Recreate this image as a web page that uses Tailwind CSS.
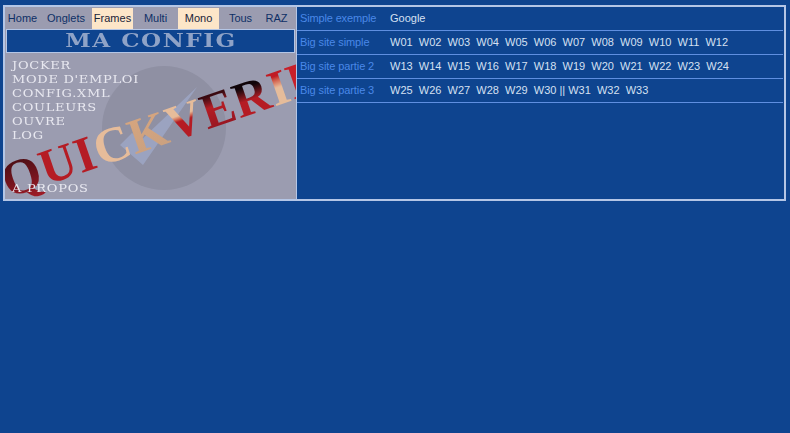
<!DOCTYPE html>
<html><head><meta charset="utf-8">
<script src="https://cdn.jsdelivr.net/npm/@tailwindcss/browser@4"></script>
</head>
<body class="m-0 w-[790px] h-[433px] overflow-hidden bg-[#0e448f] font-['Liberation_Sans',sans-serif] text-[11px] leading-none">
<div class="ml-[3px] mt-[5px] w-[783px] h-[196px] flex border-2 border-[#b4c6e6]">
  <div class="relative w-[292px] h-full shrink-0 bg-[#9b9cb0] overflow-hidden border-r border-[#b4c6e6]">
    <div class="flex h-[22px] pt-[1px] text-[#0e2f66] text-center items-stretch">
      <a class="w-[35px] leading-[20px]">Home</a>
      <a class="w-[46px] ml-[3px] leading-[20px]">Onglets</a>
      <a class="w-[41px] ml-[3px] leading-[20px] bg-[#fde6c8] text-[#1a2438]">Frames</a>
      <a class="w-[45px] leading-[20px]">Multi</a>
      <a class="w-[41px] leading-[20px] bg-[#fde6c8] text-[#1a2438]">Mono</a>
      <a class="w-[43px] leading-[20px]">Tous</a>
      <a class="w-[29px] leading-[20px]">RAZ</a>
    </div>
    <div class="mx-[1px] h-[24px] bg-[#0e448f] border border-[#b4c6e6] flex items-center justify-center relative z-10">
      <span class="font-['DejaVu_Serif',serif] font-bold text-[#8fa3c7] text-[18px] tracking-[1.2px] scale-x-[1.28]">MA CONFIG</span>
    </div>
    <div class="absolute left-[97px] top-[59px] w-[124px] h-[124px] rounded-full bg-[#8f90a3]"></div>
    <svg class="absolute left-0 top-0" width="292" height="192" viewBox="0 0 292 192"><polygon points="115,138 127,126 136,133 192,80 138,158" fill="#9ba3c0"/></svg>
    <div class="absolute left-[-2px] top-[150px] origin-left rotate-[-19deg] font-['Liberation_Serif',serif] font-bold text-[50px] leading-[50px] tracking-[0.8px] whitespace-nowrap">
      <span class="bg-linear-to-b from-[#3a0a10] to-[#a51c28] bg-clip-text text-transparent">Q</span><span class="text-[#b51c24]">UI</span><span class="text-[#e6bc9a]">C</span><span class="bg-linear-to-b from-[#d9a67e] to-[#c8a080] bg-clip-text text-transparent">K</span><span class="bg-linear-to-b from-[#e6bc9a] from-40% to-[#b51c24] to-50% bg-clip-text text-transparent">V</span><span class="bg-linear-to-b from-[#3a0a10] from-25% via-[#b51c24] via-45% to-[#8a1420] bg-clip-text text-transparent">E</span><span class="bg-linear-to-b from-[#100408] from-30% to-[#b51c24] to-55% bg-clip-text text-transparent">R</span><span class="bg-linear-to-b from-[#c01c24] from-30% to-[#e6bc9a] to-50% bg-clip-text text-transparent">I</span><span class="text-[#c8202a]">F</span>
    </div>
    <div class="absolute left-[7px] top-[52px] origin-left scale-x-[1.18] font-['DejaVu_Serif',serif] text-[#e8e8f0] text-[11px] leading-[14px] tracking-[0.6px] whitespace-nowrap">
      <div>JOCKER</div><div>MODE D'EMPLOI</div><div>CONFIG.XML</div><div>COULEURS</div><div>OUVRE</div><div>LOG</div>
      <div class="mt-[39px]">A PROPOS</div>
    </div>
  </div>
  <div class="flex-1 flex flex-col text-[#d5e0f2] pr-[1px]">
    <div class="h-[24px] flex items-center border-b border-[#5f8fe0] pl-[3px]"><span class="w-[90px] text-[#4a88e8] tracking-[-0.15px]">Simple exemple</span><span>Google</span></div>
    <div class="h-[24px] flex items-center border-b border-[#5f8fe0] pl-[3px]"><span class="w-[90px] text-[#4a88e8] tracking-[-0.1px]">Big site simple</span><div class="flex gap-[6.13px]"><span>W01</span><span>W02</span><span>W03</span><span>W04</span><span>W05</span><span>W06</span><span>W07</span><span>W08</span><span>W09</span><span>W10</span><span>W11</span><span>W12</span></div></div>
    <div class="h-[24px] flex items-center border-b border-[#5f8fe0] pl-[3px]"><span class="w-[90px] text-[#4a88e8] tracking-[-0.1px]">Big site partie 2</span><div class="flex gap-[6.13px]"><span>W13</span><span>W14</span><span>W15</span><span>W16</span><span>W17</span><span>W18</span><span>W19</span><span>W20</span><span>W21</span><span>W22</span><span>W23</span><span>W24</span></div></div>
    <div class="h-[24px] flex items-center border-b border-[#5f8fe0] pl-[3px]"><span class="w-[90px] text-[#4a88e8] tracking-[-0.1px]">Big site partie 3</span><div class="flex gap-[6.13px]"><span>W25</span><span>W26</span><span>W27</span><span>W28</span><span>W29</span><span>W30 || W31</span><span>W32</span><span>W33</span></div></div>
  </div>
</div>
</body></html>
